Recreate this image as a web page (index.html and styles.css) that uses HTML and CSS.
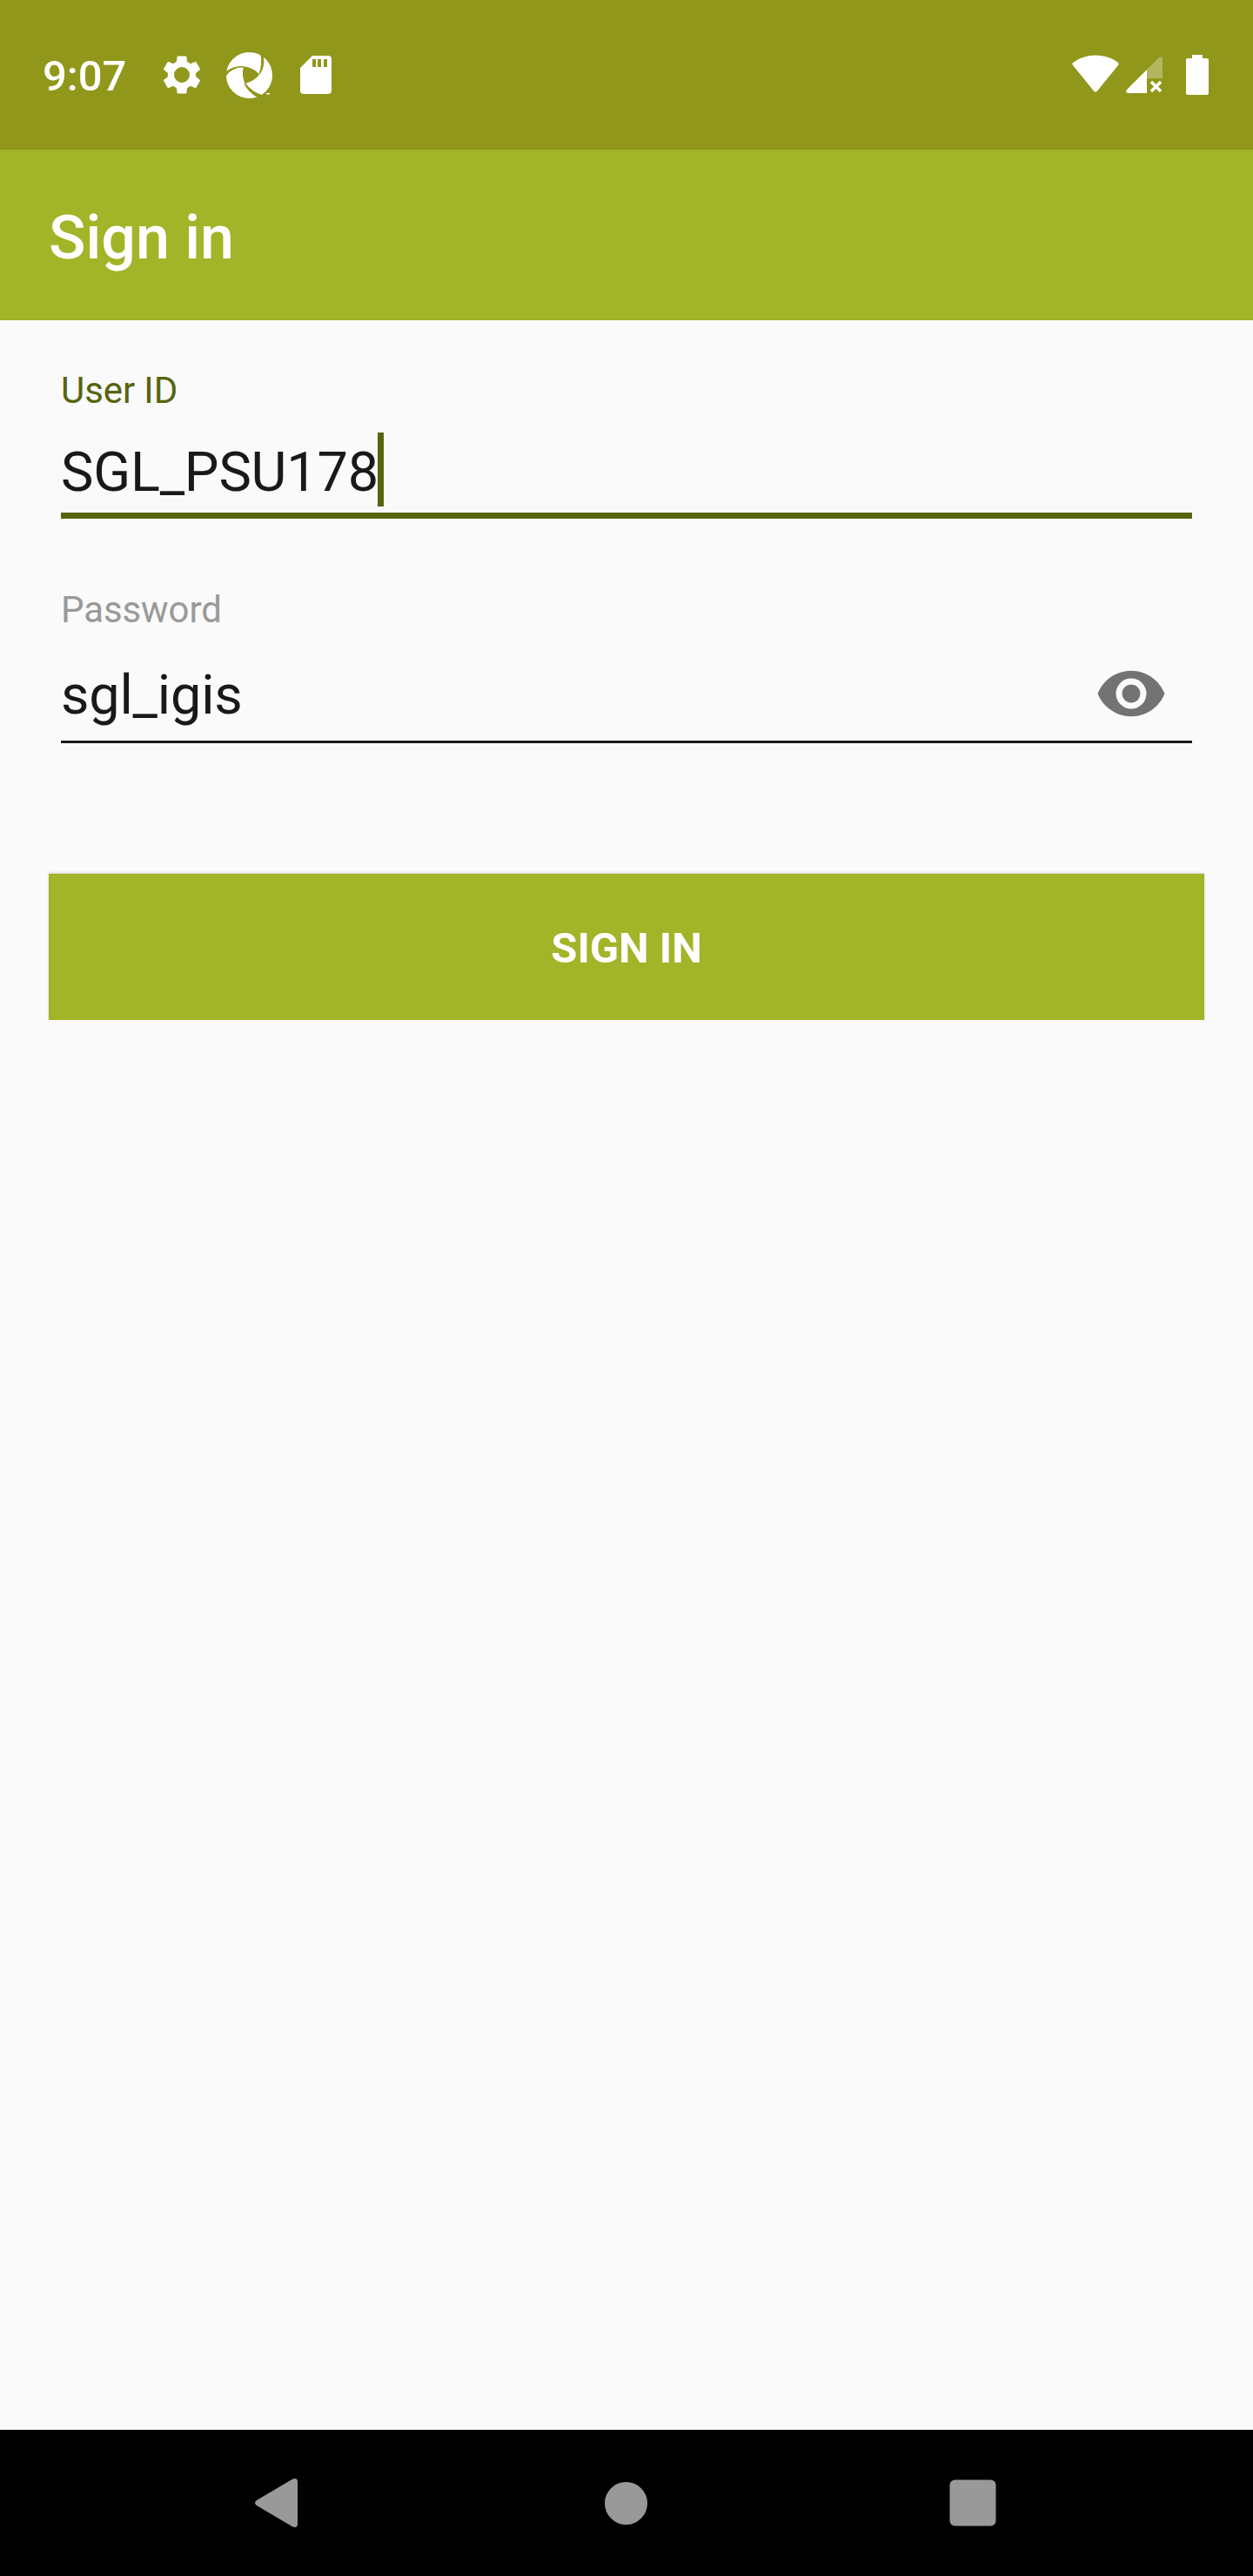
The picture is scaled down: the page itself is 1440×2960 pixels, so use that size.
FILE: index.html
```html
<!DOCTYPE html>
<html lang="en">
<head>
<meta charset="utf-8">
<title>Sign in</title>
<link rel="stylesheet" href="styles.css">
</head>
<body>
<div class="screen">
  <header class="status-bar">
    <span class="clock">9:07</span>
    <div class="notifications">
      <svg class="icon-gear" width="54" height="54" viewBox="0 0 24 24" fill="#fff"><path d="M19.14 12.94c.04-.3.06-.61.06-.94 0-.32-.02-.64-.07-.94l2.03-1.58c.18-.14.23-.41.12-.61l-1.92-3.32c-.12-.22-.37-.29-.59-.22l-2.39.96c-.5-.38-1.03-.7-1.62-.94L14.4 2.81c-.04-.24-.24-.41-.48-.41h-3.84c-.24 0-.43.17-.47.41l-.36 2.54c-.59.24-1.13.57-1.62.94l-2.39-.96c-.22-.08-.47 0-.59.22L2.74 8.87c-.12.21-.08.47.12.61l2.03 1.58c-.05.3-.09.63-.09.94s.02.64.07.94l-2.03 1.58c-.18.14-.23.41-.12.61l1.92 3.32c.12.22.37.29.59.22l2.39-.96c.5.38 1.03.7 1.62.94l.36 2.54c.05.24.24.41.48.41h3.84c.24 0 .44-.17.47-.41l.36-2.54c.59-.24 1.13-.56 1.62-.94l2.39.96c.22.08.47 0 .59-.22l1.92-3.32c.12-.22.07-.47-.12-.61l-2.01-1.58zM12 16a4 4 0 1 1 0-8 4 4 0 0 1 0 8z"/></svg>
      <svg class="icon-shutter" width="54" height="54" viewBox="0 0 54 54">
        <circle cx="26.500" cy="27.500" r="26.500" fill="#fff"/>
        <path class="gap" d="M20 17.500C27 18 33 21 38 26.500C34 32 29 35 21.500 37C19 31 18 25 20 17.500Z"/>
        <path class="gap" d="M0 23Q8 16 21 17L20 18.500Q7 18 0 28Z"/>
        <path class="gap" d="M39 2Q42 14 37.500 25.500L38.500 26.500Q45 17 43 7L45 2Z"/>
        <path class="gap" d="M20.500 37Q25 47 36 53V54H43L41 50Q30 47 22 36.500Z"/>
        <path fill="#fff" d="M46 48h4v1.500h-4z"/>
      </svg>
      <svg class="icon-card" width="36" height="46" viewBox="0 0 36 46"><path fill="#fff" fill-rule="evenodd" d="M14 1H32Q36 1 36 5V41Q36 45 32 45H4Q0 45 0 41V15ZM14 5V14H18V5ZM20 5V14H24V5ZM27 5V14H31V5Z"/></svg>
    </div>
    <div class="system-icons">
      <svg class="icon-wifi" width="54" height="44" viewBox="0 0 54 44"><path fill="#fff" d="M1 9Q12 0.500 27 .5T53 9Q54.200 10.500 53 12L29 41.500Q27 44 25 41.500L1 12Q-.2 10.500 1 9Z"/></svg>
      <svg class="icon-signal" width="42" height="43" viewBox="0 0 42 43"><path fill="#fff" fill-opacity=".3" d="M24 15L38 1Q42-1 42 3V25H24Z"/><path fill="#fff" d="M24 15V42H2Q-1 41 1 38Z"/><path stroke="#fff" stroke-width="3.500" d="M29 29L40 40M40 29L29 40"/></svg>
      <svg class="icon-battery" width="26" height="46" viewBox="0 0 26 46"><path fill="#fff" d="M7 0H19V4H24Q26 4 26 6V44Q26 46 24 46H2Q0 46 0 44V6Q0 4 2 4H7Z"/></svg>
    </div>
  </header>
  <div class="app-bar"><h1 class="title">Sign in</h1></div>
  <main class="form">
    <div class="field field-user">
      <span class="label">User ID</span>
      <div class="value"><span class="text">SGL_PSU178</span><i class="caret"></i></div>
    </div>
    <div class="field field-password">
      <span class="label">Password</span>
      <div class="value"><span class="text">sgl_igis</span>
        <svg class="icon-eye" width="84" height="84" viewBox="0 0 24 24"><path fill="#737373" d="M12 4.500C7 4.500 2.730 7.610 1 12c1.730 4.390 6 7.500 11 7.500s9.270-3.110 11-7.500c-1.730-4.390-6-7.500-11-7.500zM12 17a5 5 0 1 1 0-10 5 5 0 0 1 0 10zm0-8a3 3 0 1 0 0 6 3 3 0 0 0 0-6z"/></svg>
      </div>
    </div>
    <button class="submit">SIGN IN</button>
  </main>
  <nav class="nav-bar">
    <svg width="49" height="56" viewBox="0 0 49 56"><path fill="#999" d="M43 .8Q49-1.500 49 4V52Q49 57.500 43 55.200L2 31Q-2 28 2 25Z"/></svg>
    <svg class="nav-home" width="49" height="49" viewBox="0 0 49 49"><circle cx="24.500" cy="24.500" r="24.500" fill="#999"/></svg>
    <svg class="nav-recents" width="54" height="54" viewBox="0 0 54 54"><rect x=".5" y=".5" width="53" height="53" rx="6" fill="#999"/></svg>
  </nav>
</div>
</body>
</html>
```
FILE: styles.css
```css
* { box-sizing: border-box; }
body { margin: 0; font-family: Roboto, sans-serif; }
svg { display: block; flex: none; }
.screen { width: 1440px; height: 2960px; display: flex; flex-direction: column; background: #fafafa; }
.status-bar { height: 172px; flex: none; display: flex; align-items: flex-start; background: #91971a; color: #fff; padding: 0 51px 0 49px; }
.clock { width: 133px; font-size: 49px; font-weight: 500; line-height: 58px; padding-top: 59px; }
.notifications { display: flex; padding-top: 59px; }
.icon-shutter { margin-left: 24px; }
.icon-card { margin: 4px 0 0 31px; }
.gap { fill: #91971a; }
.system-icons { display: flex; margin-left: auto; padding-top: 63px; }
.icon-signal { margin: 2px 0 0 8px; }
.icon-battery { margin-left: 27px; }
.app-bar { height: 196px; flex: none; background: #a2b427; display: flex; align-items: center; padding: 6px 56px 0; }
.title { margin: 0; color: #fff; font-size: 70px; font-weight: 500; line-height: 82px; }
.form { flex: 1; display: flex; flex-direction: column; padding: 56px 56px 0; }
.field { margin: 0 14px; display: flex; flex-direction: column; }
.label { font-size: 42px; line-height: 50px; letter-spacing: -0.1px; }
.value { display: flex; align-items: center; font-size: 63px; line-height: 74px; color: #191919; }
.text { letter-spacing: -0.2px; }
.field-user { height: 172px; border-bottom: 7px solid #566510; }
.field-user .label { color: #566510; }
.field-user .value { height: 85px; margin-top: 23px; }
.field-user .text { padding-top: 7px; }
.caret { width: 7px; height: 85px; margin-left: -1px; background: #566510; }
.field-password { height: 178px; margin-top: 80px; border-bottom: 3px solid #191919; }
.field-password .label { color: #999; }
.field-password .value { justify-content: space-between; height: 84px; margin-top: 29px; padding-right: 28px; }
.field-password .text { padding-top: 4px; }
.submit { height: 168px; margin-top: 150px; border: 0; border-radius: 0; background: #a2b427; color: #fff; font: bold 49px/58px Roboto, sans-serif; box-shadow: 0 -1px 3px rgba(0,0,0,.16); padding: 4px 0 0; }
.nav-bar { height: 168px; flex: none; background: #000; display: flex; align-items: center; padding-left: 293px; }
.nav-home { margin-left: 353px; }
.nav-recents { margin-left: 347px; }
```
